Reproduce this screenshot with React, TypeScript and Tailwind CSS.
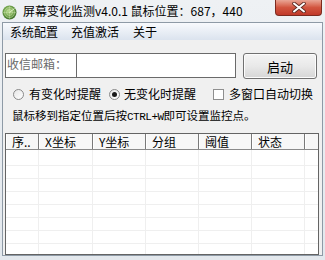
import React from "react";

const font = { fontFamily: '"Noto Sans CJK SC", "Noto Sans", sans-serif' };

function AppIcon() {
  return (
    <svg width="15" height="15" viewBox="0 0 15 15">
      <defs>
        <radialGradient id="rg" cx="45%" cy="40%" r="60%">
          <stop offset="0" stopColor="#b6d98a" />
          <stop offset="0.6" stopColor="#6fa24a" />
          <stop offset="1" stopColor="#3e6f2a" />
        </radialGradient>
      </defs>
      <circle cx="7.5" cy="7.5" r="7" fill="url(#rg)" />
      <circle cx="7.5" cy="7.5" r="5" fill="none" stroke="#d8eab8" strokeWidth="0.6" opacity="0.8" />
      <circle cx="7.5" cy="7.5" r="3" fill="none" stroke="#d8eab8" strokeWidth="0.6" opacity="0.8" />
      <path d="M7.5 1 V14 M1 7.5 H14" stroke="#d8eab8" strokeWidth="0.5" opacity="0.7" />
      <path d="M7.5 7.5 L12.5 3.5" stroke="#f4ffe0" strokeWidth="0.8" />
    </svg>
  );
}

function CloseButton() {
  return (
    <div className="ml-auto mr-[3px] self-start w-[47px] h-[16px] rounded-b-[4px] border border-t-0 border-[#7c2a1f] bg-gradient-to-b from-[#e9a595] via-[#d2553f] to-[#c0392a] flex items-center justify-center">
      <svg width="14" height="11" viewBox="0 0 14 11">
        <path d="M2 1.5 L12 9.5 M12 1.5 L2 9.5" stroke="#5a2a22" strokeWidth="3.6" strokeLinecap="round" />
        <path d="M2 1.5 L12 9.5 M12 1.5 L2 9.5" stroke="#ffffff" strokeWidth="2" strokeLinecap="round" />
      </svg>
    </div>
  );
}

function Radio({ checked }: { checked?: boolean }) {
  return (
    <span className="w-[11px] h-[11px] rounded-full border border-[#8a8a8a] bg-gradient-to-br from-[#e6e6e6] to-[#ffffff] flex items-center justify-center shrink-0">
      {checked && <span className="w-[5px] h-[5px] rounded-full bg-[#1a1a1a]" />}
    </span>
  );
}

const cols = [
  { label: "序..", w: "w-[33px]" },
  { label: "X坐标", w: "w-[54px]" },
  { label: "Y坐标", w: "w-[53px]" },
  { label: "分组", w: "w-[53px]" },
  { label: "阈值", w: "w-[53px]" },
  { label: "状态", w: "w-[53px]" },
];

export default function App() {
  const rows = [16, 13, 13, 13, 13, 13, 13, 13];
  return (
    <div className="w-[325px] h-[260px] bg-gradient-to-b from-[#eef1f4] to-[#e3e8ed] overflow-hidden flex flex-col" style={font}>
      <div className="h-[22px] flex items-center shrink-0">
        <div className="ml-[2px] mt-[2px]">
          <AppIcon />
        </div>
        <span className="ml-[6px] text-[12px] leading-none text-black whitespace-nowrap">
          屏幕变化监测v4.0.1 鼠标位置：687，440
        </span>
        <CloseButton />
      </div>

      <div className="mx-[2px] h-[234px] border border-[#8e9aa6] flex flex-col shrink-0">
        <div className="h-[17px] bg-gradient-to-b from-[#f8fafd] to-[#dbe3ee] flex items-center text-[12px] leading-none text-black">
          <span className="ml-[7px]">系统配置</span>
          <span className="ml-[13px]">充值激活</span>
          <span className="ml-[14px]">关于</span>
        </div>

        <div className="flex-1 bg-[#f0f0f0] flex flex-col">
          <div className="mt-[13px] ml-[2px] flex items-start h-[26px]">
            <div className="w-[72px] h-[25px] border border-[#6a6a6a] bg-white text-[12px] leading-none text-[#6a6a6a] pl-[1px] pt-[4px]">
              收信邮箱：
            </div>
            <div className="w-[159px] h-[25px] border border-l-0 border-[#6a6a6a] bg-white" />
            <button className="ml-[7px] w-[74px] h-[26px] rounded-[3px] border border-[#707070] bg-gradient-to-b from-[#f4f4f4] via-[#e9e9e9] to-[#d6d6d6] text-[13px] leading-none text-black shadow-[inset_0_0_0_1px_#fcfcfc]">
              启动
            </button>
          </div>

          <div className="mt-[7px] h-[16px] flex items-center text-[12px] leading-none text-black">
            <div className="ml-[10px] w-[96px] flex items-center gap-[5px]">
              <Radio />
              <span>有变化时提醒</span>
            </div>
            <div className="w-[104px] flex items-center gap-[4px]">
              <Radio checked />
              <span>无变化时提醒</span>
            </div>
            <div className="flex items-center gap-[5px]">
              <span className="w-[11px] h-[11px] border border-[#8f8f8f] bg-white shrink-0" />
              <span>多窗口自动切换</span>
            </div>
          </div>

          <div className="mt-[6px] h-[14px] ml-[9px] text-[11.5px] leading-[14px] text-black whitespace-nowrap">
            鼠标移到指定位置后按
            <span className="text-[11px] tracking-[-0.5px]" style={{ fontFamily: '"Liberation Mono", monospace' }}>
              CTRL+W
            </span>
            即可设置监控点。
          </div>

          <div className="mt-[11px] ml-[2px] w-[314px] h-[122px] border border-[#646464] bg-white overflow-hidden flex flex-col">
            <div className="h-[16px] flex bg-[#f7f7f7] border-b border-[#8a8a8a] shrink-0">
              {cols.map((c) => (
                <div
                  key={c.label}
                  className={`${c.w} h-full border-r border-[#7a7a7a] shadow-[inset_1px_0_0_#ffffff] pl-[6px] text-[12px] leading-[15px] text-black whitespace-nowrap overflow-hidden`}
                >
                  {c.label}
                </div>
              ))}
              <div className="flex-1 shadow-[inset_1px_0_0_#ffffff]" />
            </div>
            {rows.map((h, i) => (
              <div key={i} className="flex border-b border-[#efefef] shrink-0" style={{ height: h }}>
                {cols.map((c) => (
                  <div key={c.label} className={`${c.w} h-full border-r border-[#efefef]`} />
                ))}
                <div className="flex-1" />
              </div>
            ))}
          </div>
        </div>
      </div>
    </div>
  );
}
